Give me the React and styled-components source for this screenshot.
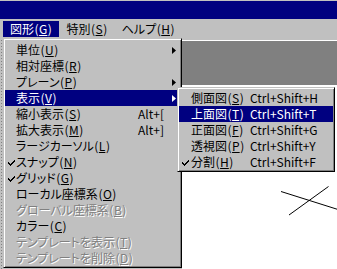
import React from "react";
import styled, { createGlobalStyle } from "styled-components";

const Global = createGlobalStyle`
  html, body { margin: 0; padding: 0; background: #c0c0c0; }
  body {
    width: 337px; height: 269px; overflow: hidden;
    font-family: "Noto Sans CJK JP", "Liberation Sans", sans-serif;
    font-size: 12px; color: #000;
    font-feature-settings: "palt" 1;
  }
`;

const Screen = styled.div`
  position: relative;
  width: 337px;
  height: 269px;
  display: flex;
  flex-direction: column;
  background: #c0c0c0;
  overflow: hidden;
`;

const TitleBar = styled.div`
  flex: none;
  height: 18px;
  margin-top: 1px;
  background: #000080;
`;

const MenuBar = styled.div`
  flex: none;
  height: 21px;
  box-sizing: border-box;
  padding: 2px 0 0 3px;
  display: flex;
  align-items: flex-start;
`;

const MenuTitle = styled.div`
  height: 16px;
  line-height: 16px;
  padding: 0 7px;
  white-space: nowrap;
  color: ${(p) => (p.$active ? "#fff" : "#000")};
  background: ${(p) => (p.$active ? "#000080" : "transparent")};
`;

const Body = styled.div`
  flex: 1;
  display: flex;
  min-height: 0;
`;

const SidePanel = styled.div`
  flex: none;
  width: 182px;
  background-color: #c0c0c0;
  background-image: repeating-linear-gradient(to bottom, #808080 0 1px, transparent 1px 3px);
  background-size: 1px 100%;
  background-position: 1px 0;
  background-repeat: no-repeat;
`;

const ViewPane = styled.div`
  flex: 1;
  display: flex;
  flex-direction: column;
  border-top: 1px solid #fff;
`;

const ViewHeader = styled.div`
  flex: none;
  height: 44px;
  background: #808080;
`;

const Canvas = styled.div`
  flex: 1;
  background: #fff;
  & > svg { display: block; width: 100%; height: 100%; }
`;

const Popup = styled.div`
  position: absolute;
  left: ${(p) => p.$x}px;
  top: ${(p) => p.$y}px;
  width: ${(p) => p.$w}px;
  height: ${(p) => p.$h}px;
  box-sizing: border-box;
  background: #c0c0c0;
  border: 1px solid;
  border-color: #c0c0c0 #000 #000 #c0c0c0;
  box-shadow: inset 1px 1px #fff, inset -1px -1px #808080;
  padding: ${(p) => p.$pad};
  display: flex;
  flex-direction: column;
`;

const Item = styled.div`
  height: 16px;
  line-height: 16px;
  display: grid;
  grid-template-columns: ${(p) => p.$cols};
  align-items: center;
  white-space: nowrap;
  background: ${(p) => (p.$active ? "#000080" : "transparent")};
  color: ${(p) => (p.$disabled ? "#808080" : p.$active ? "#fff" : "#000")};
  text-shadow: ${(p) => (p.$disabled ? "1px 1px 0 #fff" : "none")};
  & u { text-decoration: underline; text-underline-offset: 1px; text-decoration-thickness: 1px; }
`;

const CheckCell = styled.span`
  display: flex;
  align-items: center;
  padding-left: ${(p) => p.$off}px;
  height: 16px;
`;

const Label = styled.span``;

const Shortcut = styled.span``;

const ArrowCell = styled.span`
  display: flex;
  align-items: center;
  padding-left: 6px;
  height: 16px;
`;

const Paren = styled.span`
  padding: 0 0.5px;
`;

const Check = () => (
  <svg width="7" height="7" viewBox="0 0 7 7">
    <path d="M0 3h1v1h1v1h1v-1h1v-1h1v-1h1v-1h1v2h-1v1h-1v1h-1v1h-1v1h-1v-1h-1v-1h-1z" fill="currentColor" />
  </svg>
);

const Arrow = () => (
  <svg width="4" height="7" viewBox="0 0 4 7">
    <polygon points="0,0 4,3.5 0,7" fill="currentColor" />
  </svg>
);

const mainItems = [
  { label: "単位", key: "U", sub: true },
  { label: "相対座標", key: "R" },
  { label: "プレーン", key: "P", sub: true },
  { label: "表示", key: "V", sub: true, active: true },
  { label: "縮小表示", key: "S", shortcut: "Alt+[" },
  { label: "拡大表示", key: "M", shortcut: "Alt+]" },
  { label: "ラージカーソル", key: "L" },
  { label: "スナップ", key: "N", checked: true },
  { label: "グリッド", key: "G", checked: true },
  { label: "ローカル座標系", key: "O" },
  { label: "グローバル座標系", key: "B", disabled: true },
  { label: "カラー", key: "C" },
  { label: "テンプレートを表示", key: "T", disabled: true },
  { label: "テンプレートを削除", key: "D", disabled: true },
];

const subItems = [
  { label: "側面図", key: "S", shortcut: "Ctrl+Shift+H" },
  { label: "上面図", key: "T", shortcut: "Ctrl+Shift+T", active: true },
  { label: "正面図", key: "F", shortcut: "Ctrl+Shift+G" },
  { label: "透視図", key: "P", shortcut: "Ctrl+Shift+Y" },
  { label: "分割", key: "H", shortcut: "Ctrl+Shift+F", checked: true },
];

const Mnemonic = ({ label, k }) => (
  <>
    {label}
    <Paren>(</Paren>
    <u>{k}</u>
    <Paren>)</Paren>
  </>
);

export default function App() {
  return (
    <>
      <Global />
      <Screen>
        <TitleBar />
        <MenuBar>
          <MenuTitle $active>
            <Mnemonic label="図形" k="G" />
          </MenuTitle>
          <MenuTitle>
            <Mnemonic label="特別" k="S" />
          </MenuTitle>
          <MenuTitle>
            <Mnemonic label="ヘルプ" k="H" />
          </MenuTitle>
        </MenuBar>
        <Body>
          <SidePanel />
          <ViewPane>
            <ViewHeader />
            <Canvas>
              <svg viewBox="0 0 155 183" preserveAspectRatio="xMinYMin meet">
                <line x1="99" y1="106.5" x2="156" y2="124.5" stroke="#000" strokeWidth="1" />
                <line x1="107" y1="130" x2="146.5" y2="101.5" stroke="#000" strokeWidth="1" />
              </svg>
            </Canvas>
          </ViewPane>
        </Body>

        <Popup $x={3} $y={38} $w={179} $h={230} $pad="3px 3px 1px 1px">
          {mainItems.map((it) => (
            <Item
              key={it.label}
              $cols="11px 122px 1fr 12px"
              $active={it.active}
              $disabled={it.disabled}
            >
              <CheckCell $off={3}>{it.checked && <Check />}</CheckCell>
              <Label>
                <Mnemonic label={it.label} k={it.key} />
              </Label>
              <Shortcut>{it.shortcut || ""}</Shortcut>
              <ArrowCell>{it.sub && <Arrow />}</ArrowCell>
            </Item>
          ))}
        </Popup>

        <Popup $x={177} $y={87} $w={158} $h={85} $pad="2px 1px 1px 1px">
          {subItems.map((it) => (
            <Item key={it.label} $cols="12px 59px 1fr" $active={it.active}>
              <CheckCell $off={3}>{it.checked && <Check />}</CheckCell>
              <Label>
                <Mnemonic label={it.label} k={it.key} />
              </Label>
              <Shortcut>{it.shortcut}</Shortcut>
            </Item>
          ))}
        </Popup>
      </Screen>
    </>
  );
}
